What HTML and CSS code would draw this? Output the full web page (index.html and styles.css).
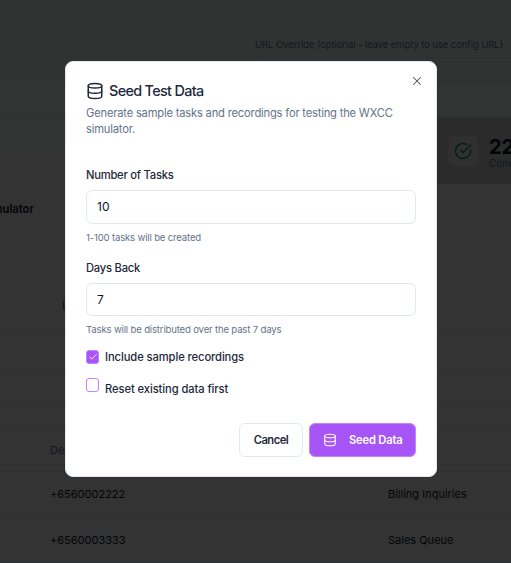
FILE: index.html
```html
<!DOCTYPE html>
<html lang="en">
<head>
<meta charset="utf-8">
<title>Seed Test Data</title>
<link rel="stylesheet" href="styles.css">
</head>
<body>
<main class="page">
  <section class="top">
    <p class="url-label">URL Override (optional - leave empty to use config URL)</p>
    <div class="url-input"></div>
  </section>
  <section class="stats">
    <div class="stat-card">
      <span class="stat-icon">
        <svg viewBox="0 0 24 24" width="18" height="18" fill="none" stroke="#16a34a" stroke-width="2" stroke-linecap="round" stroke-linejoin="round"><path d="M21.8 10A10 10 0 1 1 17 3.3"/><path d="m9 11 3 3L22 4"/></svg>
      </span>
      <div><div class="stat-num">22</div><div class="stat-lab">Completed</div></div>
    </div>
  </section>
  <section class="mid">
    <div class="sim">WXCC Simulator</div>
    <div class="use">Last</div>
  </section>
  <div class="row r47"></div>
  <div class="row r32"></div>
  <div class="row r22"></div>
  <div class="row r41"><span class="c1 head">Destination</span></div>
  <div class="row r46"><span class="c1">+6560002222</span><span class="c2">Billing Inquiries</span></div>
  <div class="row r46"><span class="c1">+6560003333</span><span class="c2">Sales Queue</span></div>
</main>
<div class="overlay"></div>
<div class="modal" role="dialog">
  <button class="close" aria-label="Close">
    <svg viewBox="0 0 24 24" width="14" height="14" fill="none" stroke="currentColor" stroke-width="1.8" stroke-linecap="round" stroke-linejoin="round"><path d="M18 6 6 18"/><path d="m6 6 12 12"/></svg>
  </button>
  <header class="m-head">
    <h2 class="title">
      <svg viewBox="0 0 24 24" width="18" height="18" fill="none" stroke="currentColor" stroke-width="2" stroke-linecap="round" stroke-linejoin="round"><ellipse cx="12" cy="5" rx="9" ry="3"/><path d="M3 5v14a9 3 0 0 0 18 0V5"/><path d="M3 12a9 3 0 0 0 18 0"/></svg>
      <span>Seed Test Data</span>
    </h2>
    <p class="desc">Generate sample tasks and recordings for testing the WXCC simulator.</p>
  </header>
  <div class="field">
    <label class="label">Number of Tasks</label>
    <div class="input">10</div>
    <p class="hint">1-100 tasks will be created</p>
  </div>
  <div class="field">
    <label class="label">Days Back</label>
    <div class="input">7</div>
    <p class="hint">Tasks will be distributed over the past 7 days</p>
  </div>
  <div class="check-row">
    <span class="box on"><svg viewBox="0 0 24 24" width="10" height="10" fill="none" stroke="#fff" stroke-width="2" stroke-linecap="round" stroke-linejoin="round"><path d="M20 6 9 17l-5-5"/></svg></span>
    <span class="check-text">Include sample recordings</span>
  </div>
  <div class="check-row second">
    <span class="box"></span>
    <span class="check-text">Reset existing data first</span>
  </div>
  <footer class="actions">
    <button class="btn cancel">Cancel</button>
    <button class="btn primary">
      <svg viewBox="0 0 24 24" width="14" height="14" fill="none" stroke="currentColor" stroke-width="1.8" stroke-linecap="round" stroke-linejoin="round"><ellipse cx="12" cy="5" rx="9" ry="3"/><path d="M3 5v14a9 3 0 0 0 18 0V5"/><path d="M3 12a9 3 0 0 0 18 0"/></svg>
      <span>Seed Data</span>
    </button>
  </footer>
</div>
</body>
</html>
```

FILE: styles.css
```css
* { box-sizing: border-box; }
html, body { margin: 0; height: 100%; overflow: hidden; }
body { font-family: Inter, "Liberation Sans", sans-serif; background: #fff; color: #0f172a; }
.page { height: 563px; background: linear-gradient(#f0fdf8 0, #fff 35%); overflow: hidden; }
.top { height: 118px; border-bottom: 1px solid #e2e8f0; padding: 39px 0 0 255px; overflow: hidden; }
.url-label { margin: 0; font-size: 9.6px; line-height: 12px; letter-spacing: -0.13px; color: #64748b; white-space: nowrap; }
.url-input { width: 280px; height: 27px; margin-top: 6px; border: 1px solid #e2e8f0; border-radius: 5px; }
.stats { height: 66px; display: flex; justify-content: flex-end; }
.stat-card { width: 74px; background: #d4d4d6; padding: 18px 0 0 11px; display: flex; gap: 11px; overflow: hidden; flex: none; }
.stat-icon { width: 30px; height: 30px; flex: none; border-radius: 6px; background: #ebf0ec; display: flex; align-items: center; justify-content: center; }
.stat-num { font-size: 20px; line-height: 22px; font-weight: 700; }
.stat-lab { font-size: 10px; line-height: 11px; color: #64748b; white-space: nowrap; }
.mid { height: 145px; border-bottom: 1px solid #e2e8f0; overflow: hidden; }
.sim { margin-left: -56px; margin-top: 18px; font-size: 11.2px; line-height: 14px; font-weight: 600; }
.use { margin: 82px 0 0 62px; font-size: 11px; color: #475569; }
.row { border-bottom: 1px solid #e2e8f0; display: flex; align-items: center; font-size: 11px; }
.r47 { height: 47px; }
.r32 { height: 32px; }
.r22 { height: 22px; }
.r41 { height: 41px; }
.r46 { height: 46px; }
.c1 { margin-left: 50px; width: 338px; flex: none; }
.head { color: #64748b; }
.overlay { position: fixed; inset: 0; background: rgba(0,0,0,.8); }
.modal { position: absolute; left: 65px; top: 61px; width: 372px; height: 416px; background: #fff; border: 1px solid #e2e8f0; border-radius: 8px; padding: 20px; }
.close { position: absolute; right: 12px; top: 12px; width: 14px; height: 14px; padding: 0; border: 0; background: none; color: #475569; display: flex; }
.m-head { margin-bottom: 31px; }
.title { margin: 0; display: flex; align-items: center; gap: 5px; font-size: 14.4px; line-height: 18px; letter-spacing: -0.67px; font-weight: 500; color: #1e293b; }
.desc { margin: 5px 0 0; font-size: 11.2px; line-height: 16px; letter-spacing: -0.2px; color: #64748b; }
.field { margin-bottom: 17px; }
.label { display: block; font-size: 11.2px; line-height: 14px; letter-spacing: -0.23px; font-weight: 500; color: #1e293b; }
.input { margin-top: 8px; height: 33.5px; border: 1px solid #e2e8f0; border-radius: 6px; padding: 0 10px; display: flex; align-items: center; font-size: 12px; color: #0f172a; }
.hint { margin: 8px 0 0; font-size: 9.6px; line-height: 12px; letter-spacing: -0.18px; color: #64748b; }
.check-row { display: flex; align-items: center; gap: 6px; height: 14px; margin-top: -3px; }
.second { margin-top: 18px; }
.second .box { margin-top: -9px; }
.box { width: 13px; height: 14px; border: 1px solid #c084fc; border-radius: 3px; display: flex; align-items: center; justify-content: center; flex: none; }
.on { background: #a855f7; }
.check-text { font-size: 11.2px; letter-spacing: -0.09px; font-weight: 500; color: #1e293b; }
.actions { margin-top: 27px; display: flex; justify-content: flex-end; gap: 6px; }
.btn { height: 34px; border-radius: 6px; font: 600 11.2px Inter, "Liberation Sans", sans-serif; display: flex; align-items: center; }
.cancel { width: 64px; background: #fff; border: 1px solid #e2e8f0; color: #1e293b; justify-content: center; letter-spacing: -0.5px; }
.primary { width: 107px; background: #a855f7; border: 1px solid #c084fc; color: #fff; gap: 12px; padding: 0 0 0 13px; letter-spacing: -0.2px; }
```
